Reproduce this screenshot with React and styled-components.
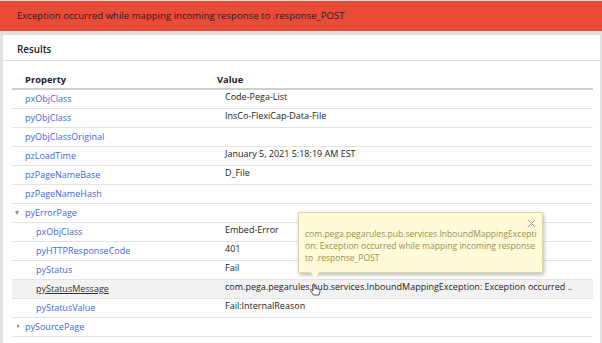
import React from "react";
import styled, { createGlobalStyle } from "styled-components";

const Global = createGlobalStyle`
  html, body { margin: 0; padding: 0; background: #dfe1e5; }
  body { font-family: "Open Sans", "Noto Sans", sans-serif; font-size: 9px; color: #222; }
  #root { width: 602px; height: 343px; overflow: hidden; }
`;

const Page = styled.div`
  display: flex;
  flex-direction: column;
  height: 343px;
  padding-top: 1px;
  box-sizing: border-box;
`;

const Banner = styled.div`
  height: 30px;
  background: #e94b39;
  color: #2a1a18;
  font-size: 9.6px;
  display: flex;
  align-items: center;
  padding-left: 17px;
  padding-bottom: 1px;
  box-sizing: border-box;
`;

const Panel = styled.div`
  flex: 1;
  margin: 4px 2px 0 3px;
  background: #fff;
  display: flex;
  flex-direction: column;
  position: relative;
`;

const PanelHeader = styled.div`
  height: 26px;
  border-bottom: 1px solid #dcdcdc;
  display: flex;
  align-items: center;
  padding: 3px 0 0 14px;
  font-weight: 600;
  font-size: 9.8px;
  color: #222;
  box-sizing: border-box;
`;

const Table = styled.div`
  margin: 9px 7px 0 9px;
  display: flex;
  flex-direction: column;
`;

const HeadRow = styled.div`
  display: flex;
  height: 17px;
  align-items: center;
  padding-top: 1px;
  border-bottom: 2px solid #cfcfcf;
  font-weight: 700;
  font-size: 9.4px;
  color: #222;
  box-sizing: content-box;
`;

const HeadCell = styled.div`
  width: ${(p) => p.$w || "auto"};
  flex: ${(p) => (p.$w ? "none" : 1)};
  padding-left: ${(p) => p.$pad || 0}px;
  box-sizing: border-box;
`;

const Row = styled.div`
  display: flex;
  height: 19px;
  border-bottom: 1px solid #e3e3e3;
  box-sizing: border-box;
  background: ${(p) => (p.$hover ? "#f2f2f2" : "transparent")};
`;

const PropCell = styled.div`
  width: 205px;
  flex: none;
  display: flex;
  align-items: center;
  padding-left: ${(p) => p.$indent}px;
  box-sizing: border-box;
  position: relative;
  color: ${(p) => (p.$hover ? "#333" : "#3f67d8")};
  text-decoration: ${(p) => (p.$hover ? "underline" : "none")};
  line-height: 18px;
`;

const Toggle = styled.span`
  position: absolute;
  left: ${(p) => (p.$open ? 3 : 5)}px;
  top: ${(p) => (p.$open ? 7 : 6)}px;
  width: 0;
  height: 0;
  border-style: solid;
  ${(p) =>
    p.$open
      ? "border-width: 4px 2.5px 0 2.5px; border-color: #8a8a8a transparent transparent transparent;"
      : "border-width: 2.5px 0 2.5px 3.5px; border-color: transparent transparent transparent #9a9a9a;"}
`;

const ValueCell = styled.div`
  flex: 1;
  padding-left: 8px;
  line-height: 14px;
  color: #222;
  white-space: nowrap;
  overflow: hidden;
`;

const Tooltip = styled.div`
  position: absolute;
  left: 295px;
  top: 177px;
  width: 245px;
  height: 61px;
  box-sizing: border-box;
  background: #fdfbd8;
  border: 1px solid #dcd8a8;
  box-shadow: 1px 2px 4px rgba(0, 0, 0, 0.28);
  padding: 15px 10px 0 6px;
  color: #a08f4e;
  font-size: 8.55px;
  line-height: 12px;
  white-space: nowrap;

  &::after {
    content: "";
    position: absolute;
    left: 12px;
    bottom: -8px;
    width: 0;
    height: 0;
    border-style: solid;
    border-width: 8px 4px 0 4px;
    border-color: #fdfbd8 transparent transparent transparent;
  }
`;

const Close = styled.svg`
  position: absolute;
  right: 6px;
  top: 6px;
`;

const Cursor = styled.svg`
  position: absolute;
  left: 306px;
  top: 248px;
`;

const rows = [
  { p: "pxObjClass", v: "Code-Pega-List", i: 13 },
  { p: "pyObjClass", v: "InsCo-FlexiCap-Data-File", i: 13 },
  { p: "pyObjClassOriginal", v: "", i: 13 },
  { p: "pzLoadTime", v: "January 5, 2021 5:18:19 AM EST", i: 13 },
  { p: "pzPageNameBase", v: "D_File", i: 13 },
  { p: "pzPageNameHash", v: "", i: 13 },
  { p: "pyErrorPage", v: "", i: 13, toggle: "open" },
  { p: "pxObjClass", v: "Embed-Error", i: 24 },
  { p: "pyHTTPResponseCode", v: "401", i: 24 },
  { p: "pyStatus", v: "Fail", i: 24 },
  {
    p: "pyStatusMessage",
    v: "com.pega.pegarules.pub.services.InboundMappingException: Exception occurred ..",
    i: 24,
    hover: true,
  },
  { p: "pyStatusValue", v: "Fail:InternalReason", i: 24 },
  { p: "pySourcePage", v: "", i: 13, toggle: "closed" },
];

export default function App() {
  return (
    <Page>
      <Global />
      <Banner>Exception occurred while mapping incoming response to .response_POST</Banner>
      <Panel>
        <PanelHeader>Results</PanelHeader>
        <Table>
          <HeadRow>
            <HeadCell $w="205px" $pad={13}>Property</HeadCell>
            <HeadCell>Value</HeadCell>
          </HeadRow>
          {rows.map((r, idx) => (
            <Row key={idx} $hover={r.hover}>
              <PropCell $indent={r.i} $hover={r.hover}>
                {r.toggle && <Toggle $open={r.toggle === "open"} />}
                {r.p}
              </PropCell>
              <ValueCell>{r.v}</ValueCell>
            </Row>
          ))}
        </Table>
        <Tooltip>
          com.pega.pegarules.pub.services.InboundMappingExcepti
          <br />
          on: Exception occurred while mapping incoming response
          <br />
          to .response_POST
          <Close width="9" height="9" viewBox="0 0 9 9">
            <path d="M1 1 L8 8 M8 1 L1 8" stroke="#9a9a9a" strokeWidth="1" fill="none" />
          </Close>
        </Tooltip>
        <Cursor width="14" height="14" viewBox="0 0 14 14">
          <path
            d="M4 1 L4 8 L2.5 6.8 L1.5 7.6 L4.5 12 L10 12 L11 8.5 L11 6.5 L9.5 6 L8 6 L6 5.5 L5.5 1 Z"
            fill="#fff"
            stroke="#333"
            strokeWidth="0.8"
            strokeLinejoin="round"
          />
        </Cursor>
      </Panel>
    </Page>
  );
}
